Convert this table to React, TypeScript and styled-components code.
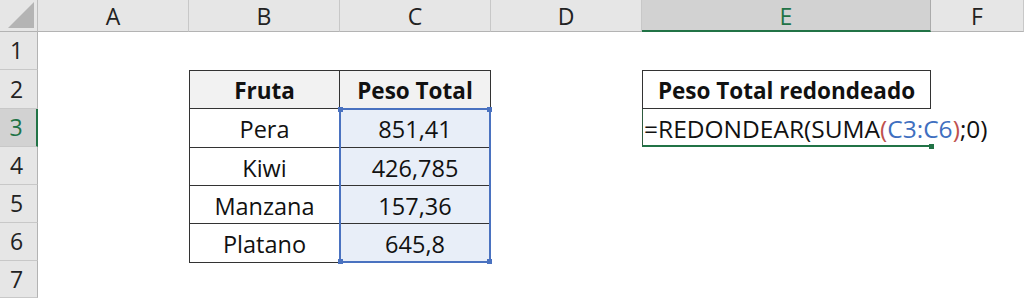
import React from "react";
import styled, { createGlobalStyle } from "styled-components";

const Global = createGlobalStyle`
  html, body { margin: 0; padding: 0; background: #ffffff; }
  body { font-family: "Open Sans", "Noto Sans", sans-serif; overflow: hidden; }
`;

const GREEN = "#217346";
const BLUE = "#4a72c0";

const Sheet = styled.div`
  display: grid;
  grid-template-columns: 38px 151px 151px 151px 151px 289px 1fr;
  grid-template-rows: 32px 38px 39px 38px 38px 38px 38px 37px;
  width: 1024px;
  height: 298px;
  background: #ffffff;
  overflow: hidden;
`;

const Corner = styled.div`
  background: #e6e6e6;
  border-right: 1px solid #bdbdbd;
  border-bottom: 1px solid #b3b3b3;
  box-sizing: border-box;
  display: flex;
  align-items: flex-end;
  justify-content: flex-end;
  padding: 0 3px 3px 0;
`;

const CornerTriangle = styled.svg`
  width: 26px;
  height: 26px;
  display: block;
`;

const ColHeader = styled.div<{ $active?: boolean }>`
  box-sizing: border-box;
  background: ${(p) => (p.$active ? "#d2d2d2" : "#e6e6e6")};
  color: ${(p) => (p.$active ? GREEN : "#222222")};
  border-right: 1px solid ${(p) => (p.$active ? "#ababab" : "#c8c8c8")};
  border-bottom: ${(p) => (p.$active ? `2px solid ${GREEN}` : "1px solid #b3b3b3")};
  display: flex;
  align-items: center;
  justify-content: center;
  font-family: "Open Sans", sans-serif;
  font-size: 23px;
  line-height: 1;
  padding-top: 2px;
`;

const RowHeader = styled.div<{ $active?: boolean; $row: number }>`
  grid-column: 1;
  grid-row: ${(p) => p.$row};
  box-sizing: border-box;
  background: ${(p) => (p.$active ? "#d2d2d2" : "#e6e6e6")};
  color: ${(p) => (p.$active ? GREEN : "#222222")};
  border-right: ${(p) => (p.$active ? `2px solid ${GREEN}` : "1px solid #b3b3b3")};
  border-bottom: 1px solid #c8c8c8;
  display: flex;
  align-items: center;
  justify-content: center;
  font-family: "Open Sans", sans-serif;
  font-size: 23px;
  line-height: 1;
  padding-right: 4px;
`;

const Table = styled.div`
  grid-column: 3 / 5;
  grid-row: 3 / 8;
  align-self: start;
  display: grid;
  grid-template-columns: 150px 151px;
  grid-template-rows: 38px 39px 38px 38px 39px;
  border-top: 1px solid #333333;
  border-left: 1px solid #333333;
  box-sizing: border-box;
`;

const Cell = styled.div<{ $bold?: boolean; $head?: boolean; $sel?: boolean; $r: number; $c: number }>`
  grid-row: ${(p) => p.$r};
  grid-column: ${(p) => p.$c};
  box-sizing: border-box;
  border-right: 1px solid #333333;
  border-bottom: 1px solid #333333;
  background: ${(p) => (p.$sel ? "#e8eef8" : p.$head ? "#f2f2f2" : "#ffffff")};
  display: flex;
  align-items: center;
  justify-content: center;
  font-family: "Open Sans", sans-serif;
  font-size: ${(p) => (p.$bold ? "22.5px" : "23.5px")};
  font-weight: ${(p) => (p.$bold ? 700 : 400)};
  color: #111111;
  padding-top: 2px;
  white-space: nowrap;
`;

const Selection = styled.div`
  grid-column: 2;
  grid-row: 2 / 6;
  margin: -1px 0 0 -1px;
  border: 2px solid ${BLUE};
  position: relative;
  pointer-events: none;
  box-sizing: border-box;
`;

const Handle = styled.span<{ $top?: boolean; $left?: boolean }>`
  position: absolute;
  width: 5px;
  height: 5px;
  background: ${BLUE};
  ${(p) => (p.$top ? "top: -3px;" : "bottom: -3px;")}
  ${(p) => (p.$left ? "left: -3px;" : "right: -3px;")}
`;

const ResultHead = styled.div`
  grid-column: 6;
  grid-row: 3;
  box-sizing: border-box;
  border: 1px solid #333333;
  display: flex;
  align-items: center;
  justify-content: center;
  font-family: "Open Sans", sans-serif;
  font-size: 22.5px;
  font-weight: 700;
  color: #111111;
  padding-top: 2px;
  white-space: nowrap;
`;

const EditCell = styled.div`
  grid-column: 6;
  grid-row: 4;
  box-sizing: border-box;
  border-left: 1px solid #2e5a3e;
  border-bottom: 2px solid ${GREEN};
  display: flex;
  align-items: center;
  padding-left: 1px;
  padding-top: 2px;
  position: relative;
  overflow: visible;
  white-space: nowrap;
  font-family: "Open Sans", sans-serif;
  font-size: 24.5px;
  color: #111111;
  z-index: 1;
`;

const EditHandle = styled.span`
  position: absolute;
  right: -3px;
  bottom: -4px;
  width: 5px;
  height: 5px;
  background: ${GREEN};
`;

const Paren = styled.span`
  color: #c0504d;
`;

const Ref = styled.span`
  color: #3f6fc0;
`;

const cols = ["A", "B", "C", "D", "E", "F"];
const rows = [1, 2, 3, 4, 5, 6, 7];

const data: [string, string][] = [
  ["Pera", "851,41"],
  ["Kiwi", "426,785"],
  ["Manzana", "157,36"],
  ["Platano", "645,8"],
];

export default function App() {
  return (
    <>
      <Global />
      <Sheet>
        <Corner>
          <CornerTriangle viewBox="0 0 26 26">
            <polygon points="26,0 26,26 0,26" fill="#b4b4b4" />
          </CornerTriangle>
        </Corner>
        {cols.map((c) => (
          <ColHeader key={c} $active={c === "E"}>
            {c}
          </ColHeader>
        ))}
        {rows.map((r) => (
          <RowHeader key={r} $row={r + 1} $active={r === 3}>
            {r}
          </RowHeader>
        ))}
        <Table>
          <Cell $r={1} $c={1} $head $bold>Fruta</Cell>
          <Cell $r={1} $c={2} $head $bold>Peso Total</Cell>
          {data.map(([f, w], i) => (
            <React.Fragment key={f}>
              <Cell $r={i + 2} $c={1}>{f}</Cell>
              <Cell $r={i + 2} $c={2} $sel>{w}</Cell>
            </React.Fragment>
          ))}
          <Selection>
            <Handle $top $left />
            <Handle $top />
            <Handle $left />
            <Handle />
          </Selection>
        </Table>
        <ResultHead>Peso Total redondeado</ResultHead>
        <EditCell>
          =REDONDEAR(SUMA<Paren>(</Paren>
          <Ref>C3:C6</Ref>
          <Paren>)</Paren>;0)
          <EditHandle />
        </EditCell>
      </Sheet>
    </>
  );
}
